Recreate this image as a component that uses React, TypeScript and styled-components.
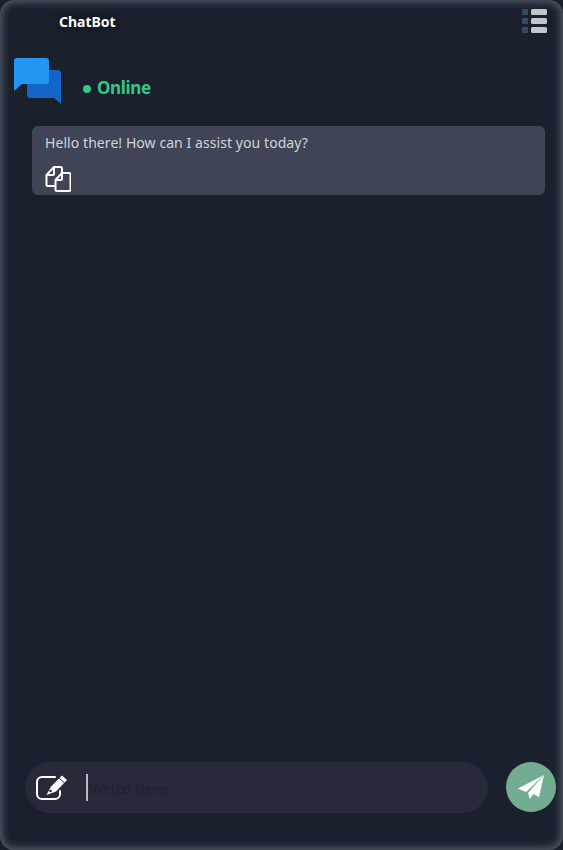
import styled, { createGlobalStyle } from "styled-components";

const GlobalStyle = createGlobalStyle`
  html, body {
    margin: 0;
    padding: 0;
    background: #1a202c;
  }
  * {
    box-sizing: border-box;
  }
`;

const Window = styled.div`
  width: 563px;
  height: 850px;
  display: flex;
  flex-direction: column;
  background: #1a202c;
  border-radius: 14px;
  box-shadow: inset 0 0 8px 2px #59626d;
  font-family: "Noto Sans", "Open Sans", sans-serif;
  overflow: hidden;
`;
const Header = styled.header`
  height: 58px;
  flex: none;
  padding: 9px 16px 0 59px;
  display: flex;
  justify-content: space-between;
  align-items: flex-start;
`;
const Title = styled.h1`
  margin: 3px 0 0;
  font-size: 14px;
  line-height: 19px;
  font-weight: 700;
  color: #ffffff;
  text-shadow: 0 0 6px rgba(0, 0, 0, 0.8);
`;
const MenuIcon = styled.svg`
  width: 25px;
  height: 24px;
  display: block;
`;
const StatusRow = styled.div`
  height: 68px;
  flex: none;
  padding-left: 14px;
  display: flex;
  align-items: flex-start;
`;
const Logo = styled.svg`
  width: 48px;
  height: 46px;
  flex: none;
`;
const Status = styled.div`
  margin: 18px 0 0 21px;
  display: flex;
  align-items: center;
  gap: 6px;
  font-size: 17px;
  line-height: 24px;
  font-weight: 700;
  color: #38c585;
  letter-spacing: -0.35px;
`;
const StatusDot = styled.span`
  width: 8px;
  height: 8px;
  margin-top: 2px;
  border-radius: 50%;
  background: #38c585;
`;
const Messages = styled.main`
  flex: 1;
  padding: 0 18px 0 32px;
`;
const Bubble = styled.div`
  height: 69px;
  padding: 6px 13px;
  background: #3f4456;
  border-radius: 6px;
  color: #d3d5da;
  font-size: 14px;
  line-height: 21px;
  letter-spacing: 0.07px;
`;
const CopyButton = styled.button`
  display: block;
  margin: 12px 0 0;
  padding: 0;
  border: none;
  background: none;
  width: 26px;
  height: 27px;
`;
const Composer = styled.footer`
  flex: none;
  height: 88px;
  padding: 0 7px 0 25px;
  display: flex;
  justify-content: space-between;
  align-items: flex-start;
`;
const InputBar = styled.div`
  width: 463px;
  height: 51px;
  padding-left: 11px;
  display: flex;
  align-items: center;
  background: #272a38;
  border-radius: 26px;
`;
const EditIcon = styled.svg`
  width: 33px;
  height: 29px;
  flex: none;
`;
const Input = styled.input`
  width: 370px;
  height: 27px;
  margin-left: 17px;
  padding: 0 0 0 1px;
  border: none;
  border-left: 2px solid #b8bbc2;
  outline: none;
  background: transparent;
  color: #ffffff;
  font-family: "Noto Sans", sans-serif;
  font-size: 15px;
  font-weight: 700;
  letter-spacing: 0.2px;
  &::placeholder {
    color: #212436;
    opacity: 1;
  }
`;
const SendButton = styled.button`
  width: 50px;
  height: 50px;
  padding: 0 0 0 3px;
  border: none;
  border-radius: 50%;
  background: #72ad92;
  display: flex;
  align-items: center;
  justify-content: center;
`;

export default function App() {
  return (
    <Window>
      <GlobalStyle />
      <Header>
        <Title>ChatBot</Title>
        <MenuIcon viewBox="0 0 25 24">
          {[0, 9, 18].map((y) => (
            <g key={y}>
              <rect x="0" y={y} width="6" height="6" fill="#344b60" />
              <rect x="9" y={y} width="16" height="6" rx="1.5" fill="#c2c5ca" />
            </g>
          ))}
        </MenuIcon>
      </Header>
      <StatusRow>
        <Logo viewBox="0 0 48 46">
          <path
            d="M16 12h27a4 4 0 0 1 4 4v30l-7-6H16a3 3 0 0 1-3-3V15a3 3 0 0 1 3-3z"
            fill="#1565c8"
          />
          <path
            d="M3 0h29a3 3 0 0 1 3 3v20a3 3 0 0 1-3 3H8l-8 7V3a3 3 0 0 1 3-3z"
            fill="#2196f3"
          />
        </Logo>
        <Status>
          <StatusDot />
          Online
        </Status>
      </StatusRow>
      <Messages>
        <Bubble>
          Hello there! How can I assist you today?
          <CopyButton aria-label="Copy">
            <svg viewBox="0 0 26 27" width="26" height="27" fill="none" stroke="#ffffff" strokeWidth="2" strokeLinejoin="round">
              <path d="M10 21H3a1.5 1.5 0 0 1-1.5-1.5V10L9 2h6.5a1.5 1.5 0 0 1 1.5 1.5V8" />
              <path d="M1.5 10H8a1 1 0 0 0 1-1V2" />
              <path d="M17 8h7a1.5 1.5 0 0 1 1.5 1.5v15a1.5 1.5 0 0 1-1.5 1.5H12a1.5 1.5 0 0 1-1.5-1.5V15z" fill="#3f4456" />
              <path d="M10.5 15H16a1 1 0 0 0 1-1V8" />
            </svg>
          </CopyButton>
        </Bubble>
      </Messages>
      <Composer>
        <InputBar>
          <EditIcon viewBox="0 0 33 29">
            <path
              d="M19 4H6a5 5 0 0 0-5 5v12a5 5 0 0 0 5 5h13a5 5 0 0 0 5-5v-3"
              fill="none"
              stroke="#ffffff"
              strokeWidth="2"
              strokeLinecap="round"
            />
            <path d="M15 13.5 26 2.5l5 4.5L20 18.5l-9.500 3.500z" fill="#ffffff" />
            <path d="M23 5l5.500 5" stroke="#272a38" strokeWidth="1" />
            <circle cx="14.500" cy="18" r="1.300" fill="#272a38" />
          </EditIcon>
          <Input placeholder="Write here" />
        </InputBar>
        <SendButton aria-label="Send">
          <svg viewBox="0 0 45 45" width="45" height="45" fill="#ffffff">
            <path d="M34 10 8 23.500l8 3.500z" />
            <path d="M34 10 18 28l2 6 3-5 6 3z" />
          </svg>
        </SendButton>
      </Composer>
    </Window>
  );
}
